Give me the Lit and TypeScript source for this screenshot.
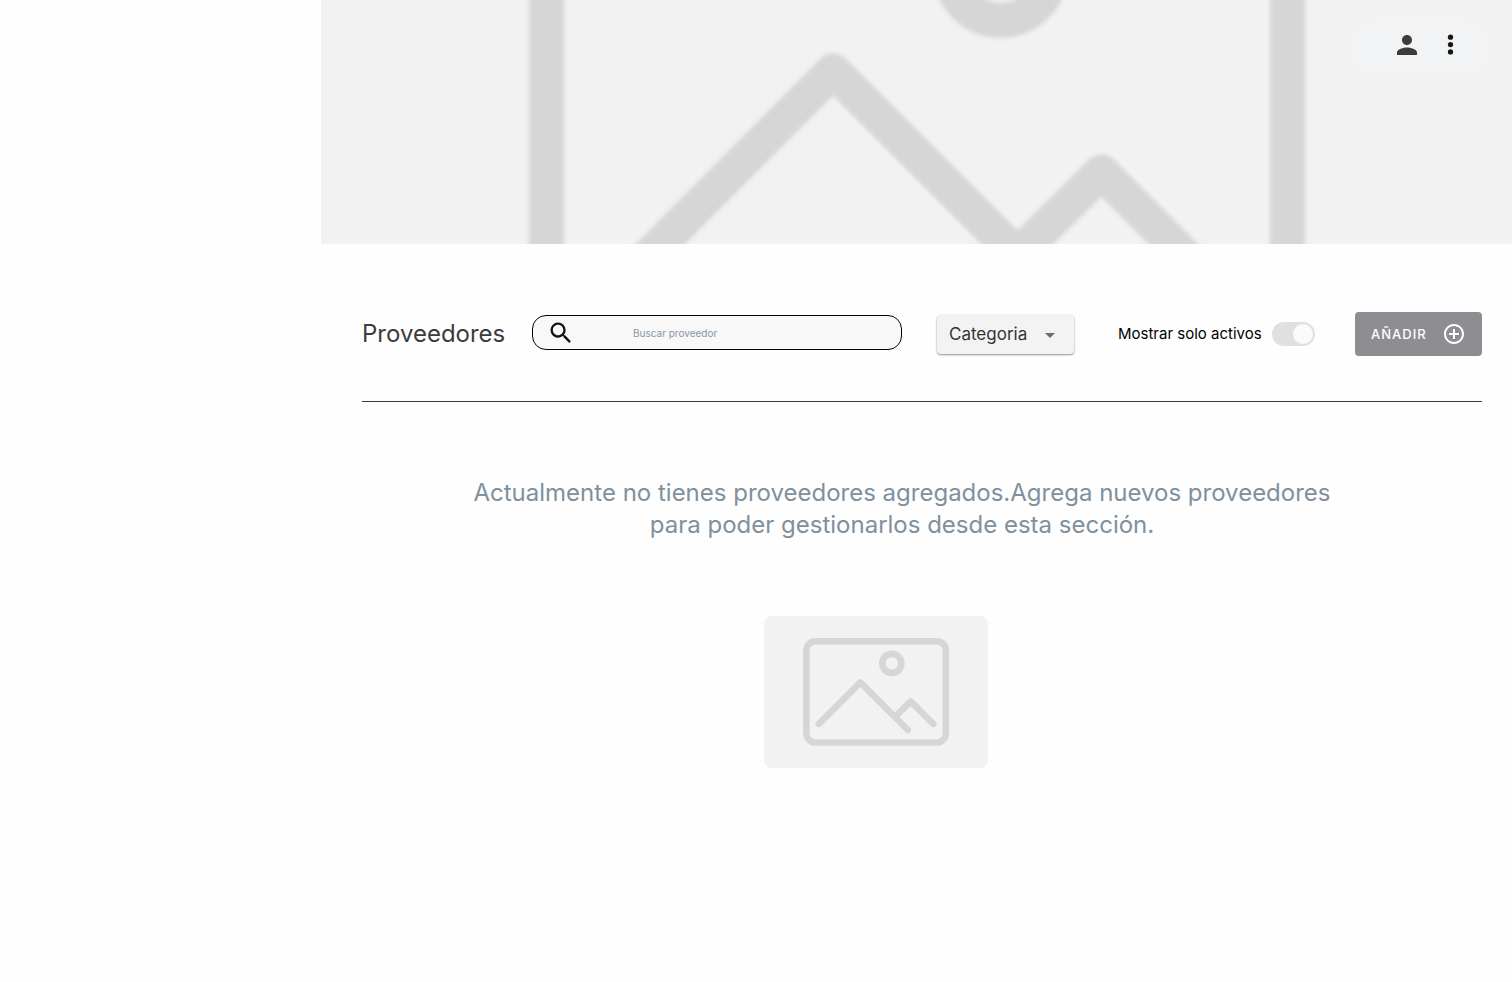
import { LitElement, html, css, svg } from "lit";
import { customElement, property, state } from "lit/decorators.js";

@customElement("image-placeholder")
class ImagePlaceholder extends LitElement {
  @property({ type: Boolean }) soft = false;

  static styles = css`
    :host {
      display: block;
      overflow: hidden;
      background: #f2f2f2;
    }
    .art {
      display: block;
      width: 100%;
      height: 100%;
    }
    .lines {
      fill: none;
      stroke: #d6d6d6;
      stroke-width: 6.6;
      stroke-linecap: round;
      stroke-linejoin: round;
    }
  `;

  render() {
    return html`
      <svg class="art" viewBox="0 0 224 152" preserveAspectRatio="xMidYMid slice" aria-hidden="true">
        <defs>
          <filter id="soften"><feGaussianBlur stdDeviation="0.45" /></filter>
        </defs>
        <g class="lines" filter=${this.soft ? "url(#soften)" : "none"}>
          ${svg`
            <rect x="42.4" y="25.3" width="139.4" height="101.2" rx="9" />
            <circle cx="127.8" cy="47.4" r="9.5" />
            <path d="M54.8 108 96.3 66.4 143.9 114" />
            <path d="M131.3 100.7 146.8 85.4 169.3 108" />
          `}
        </g>
      </svg>
    `;
  }
}

@customElement("app-root")
class AppRoot extends LitElement {
  @state() private onlyActive = true;

  static styles = css`
    :host {
      display: block;
      min-height: 100vh;
      background: #fefefe;
      color: #000;
      font-family: Inter, Roboto, sans-serif;
    }
    * {
      box-sizing: border-box;
    }
    .page {
      display: grid;
      grid-template-columns: 321px minmax(0, 1fr);
    }
    .main {
      grid-column: 2;
    }
    .hero {
      position: relative;
      height: 244px;
    }
    .cover {
      height: 100%;
    }
    .actions {
      position: absolute;
      top: 20px;
      right: 24px;
      display: flex;
      align-items: center;
      justify-content: flex-end;
      gap: 14px;
      width: 138px;
      height: 54px;
      padding: 0 22px 4px 0;
      border-radius: 27px;
      background: #f1f3f5;
    }
    .icon-button {
      display: flex;
      padding: 0;
      border: 0;
      background: none;
      color: #161616;
      cursor: pointer;
    }
    .icon-button.person {
      color: #3c3c3c;
    }
    .icon {
      display: block;
      width: 30px;
      height: 30px;
      fill: currentColor;
    }
    .content {
      padding: 68px 30px 40px 41px;
    }
    .toolbar {
      display: flex;
      align-items: center;
      padding-bottom: 45px;
      border-bottom: 1px solid #3c3c3c;
    }
    .title {
      flex: none;
      width: 170px;
      margin: 0;
      color: #3c3c3c;
      font-size: 24px;
      line-height: 32px;
      font-weight: 400;
    }
    .search {
      display: flex;
      align-items: center;
      flex: 1;
      min-width: 0;
      height: 35px;
      margin: 0 35px 3px 0;
      padding: 0 14px;
      border: 1px solid #000;
      border-radius: 14px;
      background: #f8f8f8;
    }
    .search .icon {
      flex: none;
      width: 28px;
      height: 28px;
      color: #111;
    }
    .search-input {
      flex: 1;
      min-width: 0;
      margin-left: 58px;
      padding: 0;
      border: 0;
      outline: 0;
      background: none;
      color: #3c3c3c;
      font: 400 10px/16px Inter, sans-serif;
    }
    .search-input::placeholder {
      color: #8796a5;
      opacity: 1;
    }
    .category {
      position: relative;
      flex: none;
      width: 137px;
      margin-right: 44px;
    }
    .category-select {
      display: block;
      width: 100%;
      height: 39px;
      padding: 0 12px;
      border: 0;
      border-radius: 4px;
      appearance: none;
      background: #f3f3f3;
      box-shadow: 0 1px 2px rgba(0, 0, 0, 0.4), 0 0 3px rgba(0, 0, 0, 0.08);
      color: #333;
      font: 400 17px/24px Inter, sans-serif;
    }
    .arrow {
      position: absolute;
      top: 8px;
      right: 12px;
      width: 24px;
      height: 24px;
      fill: #6d6d6d;
      pointer-events: none;
    }
    .active-filter {
      display: flex;
      align-items: center;
      justify-content: space-between;
      flex: none;
      width: 197px;
      margin-right: 40px;
      font-size: 15px;
      line-height: 24px;
      white-space: nowrap;
    }
    .switch {
      display: flex;
      flex: none;
      width: 43px;
      height: 24px;
      margin: 0;
      padding: 2px;
      border-radius: 12px;
      appearance: none;
      background: #e0e0e0;
    }
    .switch::before {
      content: "";
      width: 20px;
      height: 20px;
      border-radius: 50%;
      background: #fafafa;
    }
    .switch:checked::before {
      margin-left: auto;
    }
    .add {
      display: flex;
      align-items: center;
      justify-content: space-between;
      flex: none;
      width: 127px;
      height: 44px;
      padding: 0 16px;
      border: 0;
      border-radius: 4px;
      background: #8e8d92;
      color: #fff;
      font: 500 13px/20px Inter, sans-serif;
      letter-spacing: 1px;
      cursor: pointer;
    }
    .add .icon {
      width: 24px;
      height: 24px;
    }
    .empty {
      display: grid;
      justify-items: center;
      padding-top: 75px;
    }
    .message {
      max-width: 900px;
      margin: 0 40px 0 0;
      color: #80909d;
      font-size: 24px;
      line-height: 32px;
      text-align: center;
    }
    .thumb {
      width: 224px;
      height: 152px;
      margin: 75px 92px 0 0;
      border-radius: 8px;
    }
  `;

  render() {
    return html`
      <div class="page">
        <main class="main">
          <header class="hero">
            <image-placeholder class="cover" soft></image-placeholder>
            <div class="actions">
              <button class="icon-button person" aria-label="Perfil">
                <svg class="icon" viewBox="0 0 24 24">
                  <path d="M12 12c2.21 0 4-1.79 4-4s-1.79-4-4-4-4 1.79-4 4 1.79 4 4 4zm0 2c-2.67 0-8 1.34-8 4v2h16v-2c0-2.66-5.33-4-8-4z" />
                </svg>
              </button>
              <button class="icon-button" aria-label="Más opciones">
                <svg class="icon" viewBox="0 0 24 24">
                  <circle cx="11.6" cy="5.7" r="2.1" />
                  <circle cx="11.6" cy="11.6" r="2.1" />
                  <circle cx="11.6" cy="17.5" r="2.1" />
                </svg>
              </button>
            </div>
          </header>
          <div class="content">
            <div class="toolbar">
              <h1 class="title">Proveedores</h1>
              <label class="search">
                <svg class="icon" viewBox="0 0 24 24" aria-hidden="true">
                  <path d="M15.5 14h-.79l-.28-.27A6.47 6.47 0 0 0 16 9.5 6.5 6.5 0 1 0 9.5 16c1.61 0 3.09-.59 4.23-1.57l.27.28v.79l5 4.99L20.49 19l-4.99-5zm-6 0C7.01 14 5 11.99 5 9.5S7.01 5 9.5 5 14 7.01 14 9.5 11.99 14 9.5 14z" />
                </svg>
                <input class="search-input" type="text" placeholder="Buscar proveedor" aria-label="Buscar proveedor" />
              </label>
              <div class="category">
                <select class="category-select" aria-label="Categoria">
                  <option>Categoria</option>
                </select>
                <svg class="arrow" viewBox="0 0 24 24" aria-hidden="true"><path d="M7 10l5 5 5-5z" /></svg>
              </div>
              <label class="active-filter">
                Mostrar solo activos
                <input
                  class="switch"
                  type="checkbox"
                  role="switch"
                  .checked=${this.onlyActive}
                  @change=${(e: Event) => (this.onlyActive = (e.target as HTMLInputElement).checked)}
                />
              </label>
              <button class="add">
                AÑADIR
                <svg class="icon" viewBox="0 0 24 24" aria-hidden="true">
                  <path d="M13 7h-2v4H7v2h4v4h2v-4h4v-2h-4V7zm-1-5C6.48 2 2 6.48 2 12s4.48 10 10 10 10-4.48 10-10S17.52 2 12 2zm0 18c-4.41 0-8-3.59-8-8s3.59-8 8-8 8 3.59 8 8-3.59 8-8 8z" />
                </svg>
              </button>
            </div>
            <section class="empty">
              <p class="message">
                Actualmente no tienes proveedores agregados.Agrega nuevos proveedores para poder gestionarlos desde esta sección.
              </p>
              <image-placeholder class="thumb"></image-placeholder>
            </section>
          </div>
        </main>
      </div>
    `;
  }
}
